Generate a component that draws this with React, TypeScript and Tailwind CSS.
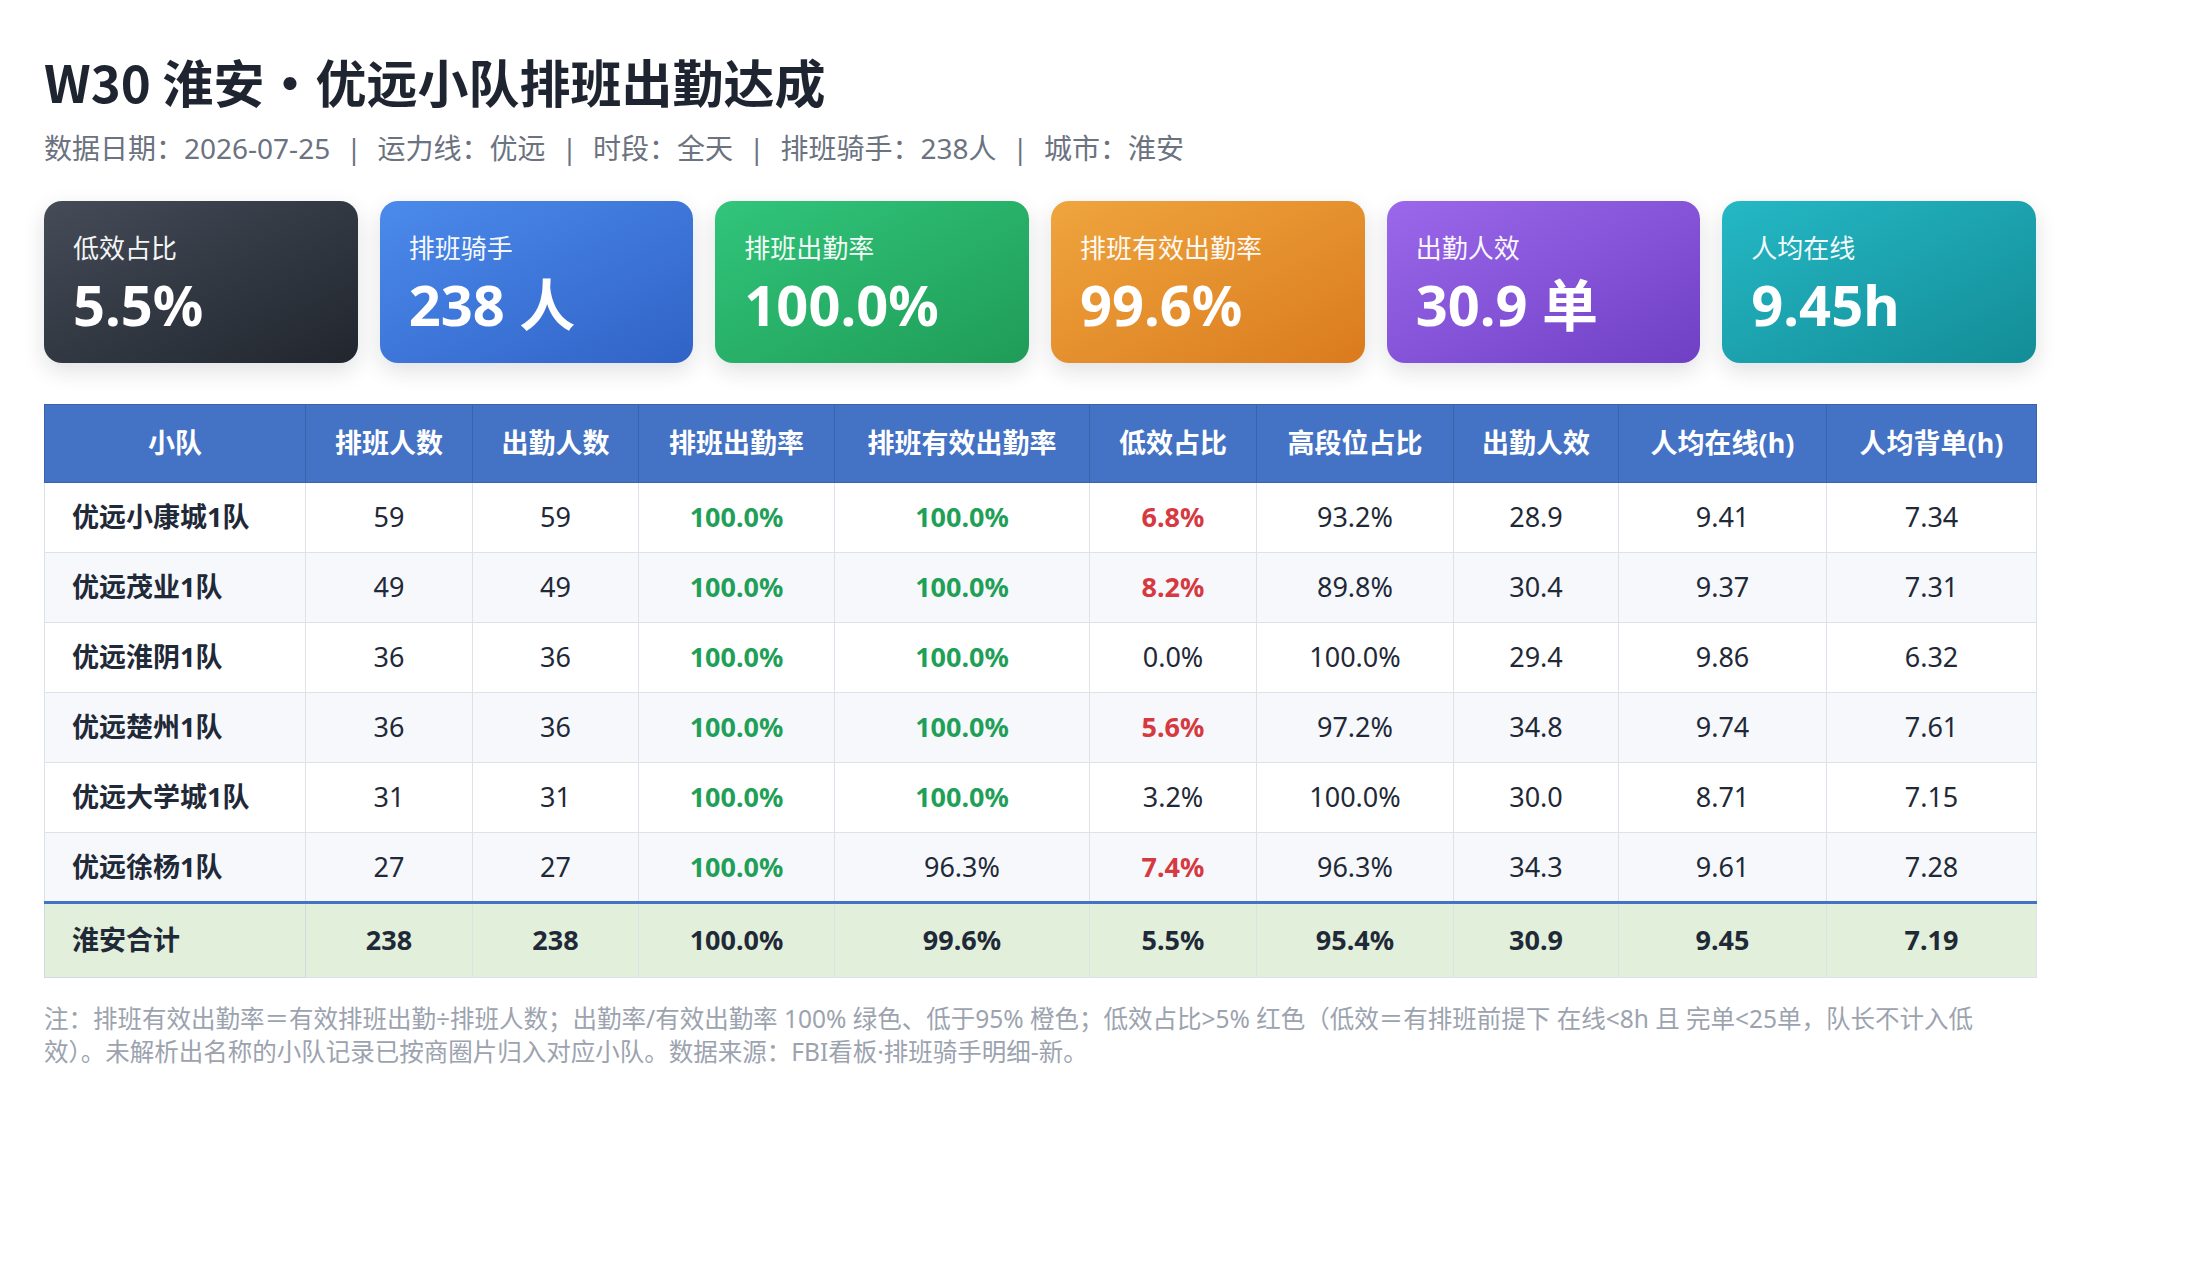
import React from 'react';

type Tone = 'green' | 'red' | 'plain';

interface Cell {
  text: string;
  tone: Tone;
}

interface Row {
  team: string;
  cells: Cell[];
}

const cards = [
  {label: '低效占比', value: '5.5%', cls: 'from-[#454c58] to-[#21262e]'},
  {label: '排班骑手', value: '238 人', cls: 'from-[#4b8aec] to-[#3163c6]'},
  {label: '排班出勤率', value: '100.0%', cls: 'from-[#31c57b] to-[#1f9c57]'},
  {label: '排班有效出勤率', value: '99.6%', cls: 'from-[#efa53d] to-[#da7b1d]'},
  {label: '出勤人效', value: '30.9 单', cls: 'from-[#9c68eb] to-[#6f3fc4]'},
  {label: '人均在线', value: '9.45h', cls: 'from-[#24b8c5] to-[#138d97]'},
];

const headers = [
  {title: '小队', w: 'w-[261px]'},
  {title: '排班人数', w: 'w-[167px]'},
  {title: '出勤人数', w: 'w-[166px]'},
  {title: '排班出勤率', w: 'w-[196px]'},
  {title: '排班有效出勤率', w: 'w-[255px]'},
  {title: '低效占比', w: 'w-[167px]'},
  {title: '高段位占比', w: 'w-[197px]'},
  {title: '出勤人效', w: 'w-[165px]'},
  {title: '人均在线(h)', w: 'w-[208px]'},
  {title: '人均背单(h)', w: 'w-[210px]'},
];

const raw: [string, string[]][] = [
  ['优远小康城1队', ['59', '59', '100.0%', '100.0%', '6.8%', '93.2%', '28.9', '9.41', '7.34']],
  ['优远茂业1队', ['49', '49', '100.0%', '100.0%', '8.2%', '89.8%', '30.4', '9.37', '7.31']],
  ['优远淮阴1队', ['36', '36', '100.0%', '100.0%', '0.0%', '100.0%', '29.4', '9.86', '6.32']],
  ['优远楚州1队', ['36', '36', '100.0%', '100.0%', '5.6%', '97.2%', '34.8', '9.74', '7.61']],
  ['优远大学城1队', ['31', '31', '100.0%', '100.0%', '3.2%', '100.0%', '30.0', '8.71', '7.15']],
  ['优远徐杨1队', ['27', '27', '100.0%', '96.3%', '7.4%', '96.3%', '34.3', '9.61', '7.28']],
];

// 出勤率 100% 绿色；低效占比 > 5% 红色
const rows: Row[] = raw.map(([team, values]) => ({
  team,
  cells: values.map((text, i) => {
    let tone: Tone = 'plain';
    if ((i === 2 || i === 3) && text === '100.0%') tone = 'green';
    if (i === 4 && parseFloat(text) > 5) tone = 'red';
    return {text, tone};
  }),
}));

const total = ['238', '238', '100.0%', '99.6%', '5.5%', '95.4%', '30.9', '9.45', '7.19'];

const toneClass = (tone: Tone) => {
  if (tone === 'green') return 'text-[#1f9f57] font-bold';
  if (tone === 'red') return 'text-[#d6393f] font-bold';
  return 'text-[#1f2937]';
};

const meta = ['数据日期：2026-07-25', '运力线：优远', '时段：全天', '排班骑手：238人', '城市：淮安'];

export default function App() {
  return (
    <div
      className="min-h-screen bg-white"
      style={{fontFamily: '"Noto Sans", "Noto Sans CJK SC", sans-serif'}}
    >
      <div className="w-[2036px] pl-[44px] pt-[50px] pb-10">
        <h1 className="font-['Noto_Sans_CJK_SC',sans-serif] text-[51px] leading-[62px] font-bold text-[#1f2530]">
          W30 淮安•优远小队排班出勤达成
        </h1>

        <p className="mt-[18px] flex items-center text-[28px] leading-[36px] text-[#6b7280]">
          {meta.map((m, i) => (
            <span key={m} className="flex items-center">
              {i > 0 && <span className="mx-[16px]">|</span>}
              {m}
            </span>
          ))}
        </p>

        <div className="mt-[35px] grid grid-cols-6 gap-[22px]">
          {cards.map(card => (
            <div
              key={card.label}
              className={`h-[162px] rounded-[18px] bg-linear-to-br ${card.cls} px-[29px] pt-[29px] text-white shadow-[0_8px_22px_rgba(15,23,42,0.13)]`}
            >
              <div className="text-[26px] leading-[36px] opacity-95">{card.label}</div>
              <div className="mt-[4px] text-[56px] leading-[68px] font-bold">{card.value}</div>
            </div>
          ))}
        </div>

        <table className="mt-[41px] w-full table-fixed border-collapse text-[27px]">
          <thead>
            <tr>
              {headers.map(h => (
                <th
                  key={h.title}
                  className={`${h.w} h-[78px] border border-[#3a63ad] bg-[#4472c4] text-center font-bold text-white`}
                >
                  {h.title}
                </th>
              ))}
            </tr>
          </thead>
          <tbody>
            {rows.map((row, r) => (
              <tr key={row.team} className={r % 2 === 1 ? 'bg-[#f6f8fc]' : 'bg-white'}>
                <td className="h-[70px] border border-[#dde2ea] pl-[27px] text-left font-bold text-[#1f2937]">
                  {row.team}
                </td>
                {row.cells.map((c, i) => (
                  <td
                    key={i}
                    className={`h-[70px] border border-[#dde2ea] text-center ${toneClass(c.tone)}`}
                  >
                    {c.text}
                  </td>
                ))}
              </tr>
            ))}
            <tr className="bg-[#e2efda]">
              <td className="h-[75px] border border-[#d3d9e2] border-t-[3px] border-t-[#4472c4] pl-[27px] text-left font-bold text-[#1f2937]">
                淮安合计
              </td>
              {total.map((t, i) => (
                <td
                  key={i}
                  className="h-[75px] border border-[#dde2ea] border-t-[3px] border-t-[#4472c4] text-center font-bold text-[#1f2937]"
                >
                  {t}
                </td>
              ))}
            </tr>
          </tbody>
        </table>

        <p className="mt-[24px] w-[1940px] text-[24.5px] leading-[33px] text-[#9ca3af]">
          注：排班有效出勤率＝有效排班出勤÷排班人数；出勤率/有效出勤率 100% 绿色、低于95% 橙色；低效占比&gt;5% 红色（低效＝有排班前提下 在线&lt;8h 且 完单&lt;25单，队长不计入低效）。未解析出名称的小队记录已按商圈片归入对应小队。数据来源：FBI看板·排班骑手明细-新。
        </p>
      </div>
    </div>
  );
}
